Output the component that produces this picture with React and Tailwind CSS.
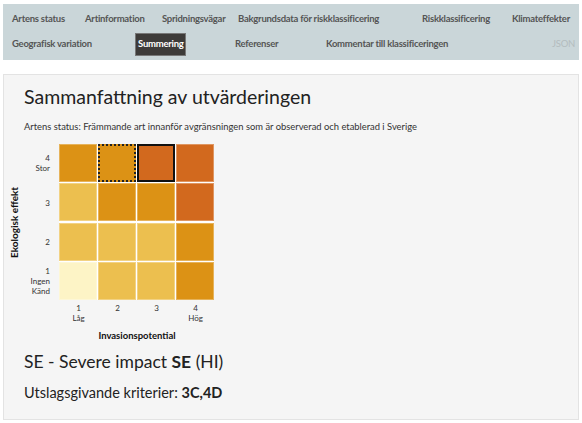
const font = { fontFamily: 'Lato, "Open Sans", sans-serif' };

// grid cells, top row first
const O = 'bg-[#dc9215]';
const C = 'bg-[#d2691e]';
const L = 'bg-[#ecbf4f]';
const P = 'bg-[#fdf4c6]';

const rows = [
  { label: ['4', 'Stor'], cells: [O, O, C, C] },
  { label: ['3'], cells: [L, O, O, C] },
  { label: ['2'], cells: [L, L, L, O] },
  { label: ['1', 'Ingen', 'Känd'], cells: [P, L, L, O] },
];

const xLabels = [['1', 'Låg'], ['2'], ['3'], ['4', 'Hög']];

export default function App() {
  return (
    <div className="w-[582px] h-[423px] bg-white text-[#333] overflow-hidden" style={font}>
      {/* tabs */}
      <nav className="mx-[3px] mt-[4px] h-[56px] bg-[#cad6d9] text-[9.5px] tracking-[-0.25px] font-bold text-[#555] pt-[3px] pl-[9px]">
        <div className="flex items-center h-[25px] whitespace-nowrap">
          <span className="w-[73px]">Artens status</span>
          <span className="w-[77px]">Artinformation</span>
          <span className="w-[76px]">Spridningsvägar</span>
          <span className="w-[184px]">Bakgrundsdata för riskklassificering</span>
          <span className="w-[90px]">Riskklassificering</span>
          <span>Klimateffekter</span>
        </div>
        <div className="flex items-center h-[25px] whitespace-nowrap">
          <span className="w-[123px]">Geografisk variation</span>
          <span className="w-[100px]">
            <span className="bg-[#3d3b39] text-white px-[2px] h-[23px] w-[51px] flex items-center border border-[#777]">Summering</span>
          </span>
          <span className="w-[91px]">Referenser</span>
          <span className="w-[226px]">Kommentar till klassificeringen</span>
          <span className="text-[#b3bcbe] font-normal">JSON</span>
        </div>
      </nav>

      {/* panel */}
      <section className="mx-[3px] mt-[14px] h-[346px] bg-[#f5f5f5] border border-[#e3e3e3] px-[20px] pt-[9px]">
        <h2 className="text-[19.5px] text-[#222] leading-[26px]">Sammanfattning av utvärderingen</h2>
        <p className="text-[9.4px] mt-[10px] text-[#333]">
          Artens status: Främmande art innanför avgränsningen som är observerad och etablerad i Sverige
        </p>

        {/* matrix */}
        <div className="mt-[10px] -ml-[16px]">
          <div className="flex">
            <div className="w-[14px] h-[156px] flex items-center justify-center">
              <span className="-rotate-90 whitespace-nowrap text-[10px] font-bold text-[#111]">Ekologisk effekt</span>
            </div>
            <div className="w-[28px] flex flex-col gap-[1px] mr-[9px]">
              {rows.map((r, i) => (
                <div key={i} className="h-[38.3px] flex flex-col items-end justify-center text-[8px] leading-[10px] text-[#333]">
                  {r.label.map((t) => (
                    <span key={t} className="text-center">{t}</span>
                  ))}
                </div>
              ))}
            </div>
            <div className="grid grid-cols-4 gap-[1px] bg-white">
              {rows.map((r, i) =>
                r.cells.map((c, j) => {
                  let extra = 'border border-white/30';
                  if (i === 0 && j === 1) extra = 'border-2 border-dotted border-[#222]';
                  if (i === 0 && j === 2) extra = 'border-2 border-[#111]';
                  return <div key={i + '-' + j} className={'w-[38px] h-[38px] ' + c + ' ' + extra} />;
                })
              )}
            </div>
          </div>
          <div className="flex ml-[51px] mt-[3px]">
            {xLabels.map((l, i) => (
              <div key={i} className="w-[39px] flex flex-col items-center text-[8px] leading-[10px] text-[#333]">
                {l.map((t) => (
                  <span key={t}>{t}</span>
                ))}
              </div>
            ))}
          </div>
          <div className="ml-[51px] w-[156px] text-center text-[9.5px] font-bold text-[#111] mt-[6px]">Invasionspotential</div>
        </div>

        <div className="text-[17.5px] text-[#222] mt-[5px]">
          SE - Severe impact <b>SE</b> (HI)
        </div>
        <div className="text-[14.5px] text-[#222] mt-[7px]">
          Utslagsgivande kriterier: <b>3C,4D</b>
        </div>
      </section>
    </div>
  );
}
